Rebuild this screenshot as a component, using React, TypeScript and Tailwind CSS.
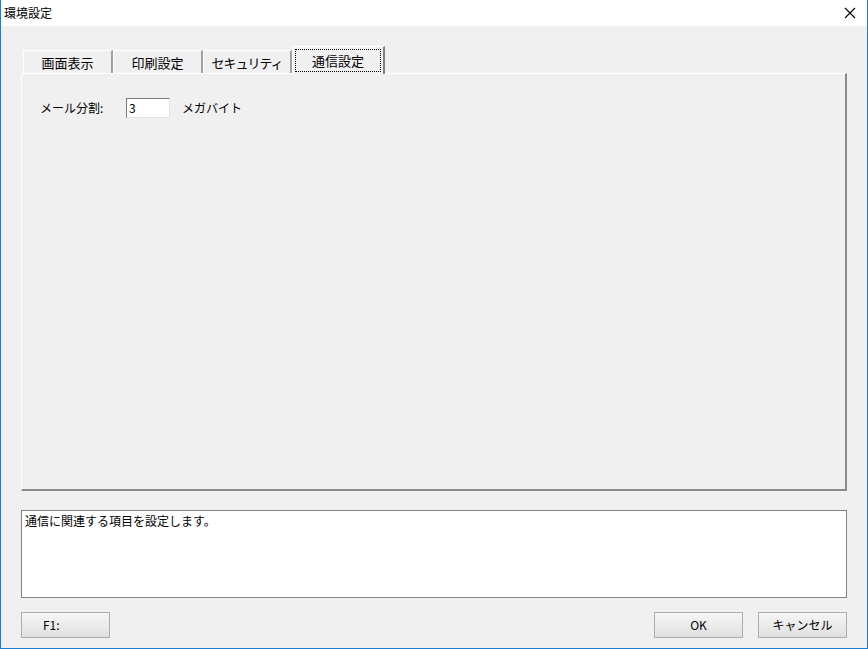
import React from 'react';

const FONT = { fontFamily: '"Noto Sans CJK JP", "Noto Sans", sans-serif' };

const tabs = [
  { label: '画面表示', w: 'w-[90px]', track: '' },
  { label: '印刷設定', w: 'w-[90px]', track: '' },
  { label: 'セキュリティ', w: 'w-[89px]', track: 'tracking-[-1px]' },
];

function Button({ children, className = '' }: { children: React.ReactNode; className?: string }) {
  return (
    <button
      className={`h-[26px] w-[89px] border border-[#adadad] bg-gradient-to-b from-[#f6f6f6] to-[#e0e0e0] text-[12px] leading-none text-black ${className}`}
    >
      {children}
    </button>
  );
}

export default function App() {
  return (
    <div
      style={FONT}
      className="flex h-[649px] w-[868px] flex-col border-x border-b border-[#1a7fd4] bg-[#f0f0f0] text-black"
    >
      {/* title bar */}
      <div className="flex h-[26px] shrink-0 items-center justify-between bg-white pl-[3px] pr-[10px]">
        <span className="text-[12px] leading-none">環境設定</span>
        <svg width="12" height="12" viewBox="0 0 12 12" className="mr-[1px]">
          <path d="M1 1 L11 11 M11 1 L1 11" stroke="#000" strokeWidth="1.1" />
        </svg>
      </div>

      <div className="flex flex-1 flex-col px-[20px]">
        {/* tabs */}
        <div className="mt-[20px] flex h-[27px] items-end pl-[2px]">
          {tabs.map((t) => (
            <div
              key={t.label}
              className={`flex h-[23px] ${t.w} ${t.track} items-center justify-center border-l border-t border-r-2 border-l-white border-t-white border-r-[#a0a0a0] text-[13px] leading-none`}
            >
              {t.label}
            </div>
          ))}
          <div className="relative z-10 -mb-[1px] flex h-[28px] w-[93px] items-center justify-center border-l border-t border-r-2 border-l-white border-t-white border-r-[#808080] bg-[#f0f0f0] px-[2px] pb-[1px]">
            <div className="flex h-[23px] w-full items-center justify-center border border-dotted border-black text-[13px] leading-none">
              通信設定
            </div>
          </div>
        </div>

        {/* panel */}
        <div className="flex h-[418px] flex-col border-l border-t border-l-white border-t-white border-r-2 border-b-2 border-r-[#8a8a8a] border-b-[#8a8a8a] pl-[18px] pt-[24px]">
          <div className="flex items-center text-[12px] leading-none">
            <span className="w-[86px]">メール分割:</span>
            <div className="flex h-[20px] w-[44px] items-center border border-t-[#7a7a7a] border-l-[#7a7a7a] border-r-[#e3e3e3] border-b-[#e3e3e3] bg-white pl-[2px]">
              3
            </div>
            <span className="ml-[12px]">メガバイト</span>
          </div>
        </div>

        {/* description */}
        <div className="mt-[19px] h-[88px] border border-[#828282] bg-white px-[3px] pt-[3px] text-[12px] leading-[14px]">
          通信に関連する項目を設定します。
        </div>

        {/* buttons */}
        <div className="mt-[14px] flex items-center">
          <Button className="pl-[21px] text-left">F1:</Button>
          <div className="flex-1" />
          <Button>OK</Button>
          <Button className="ml-[15px]">キャンセル</Button>
        </div>
      </div>
    </div>
  );
}
